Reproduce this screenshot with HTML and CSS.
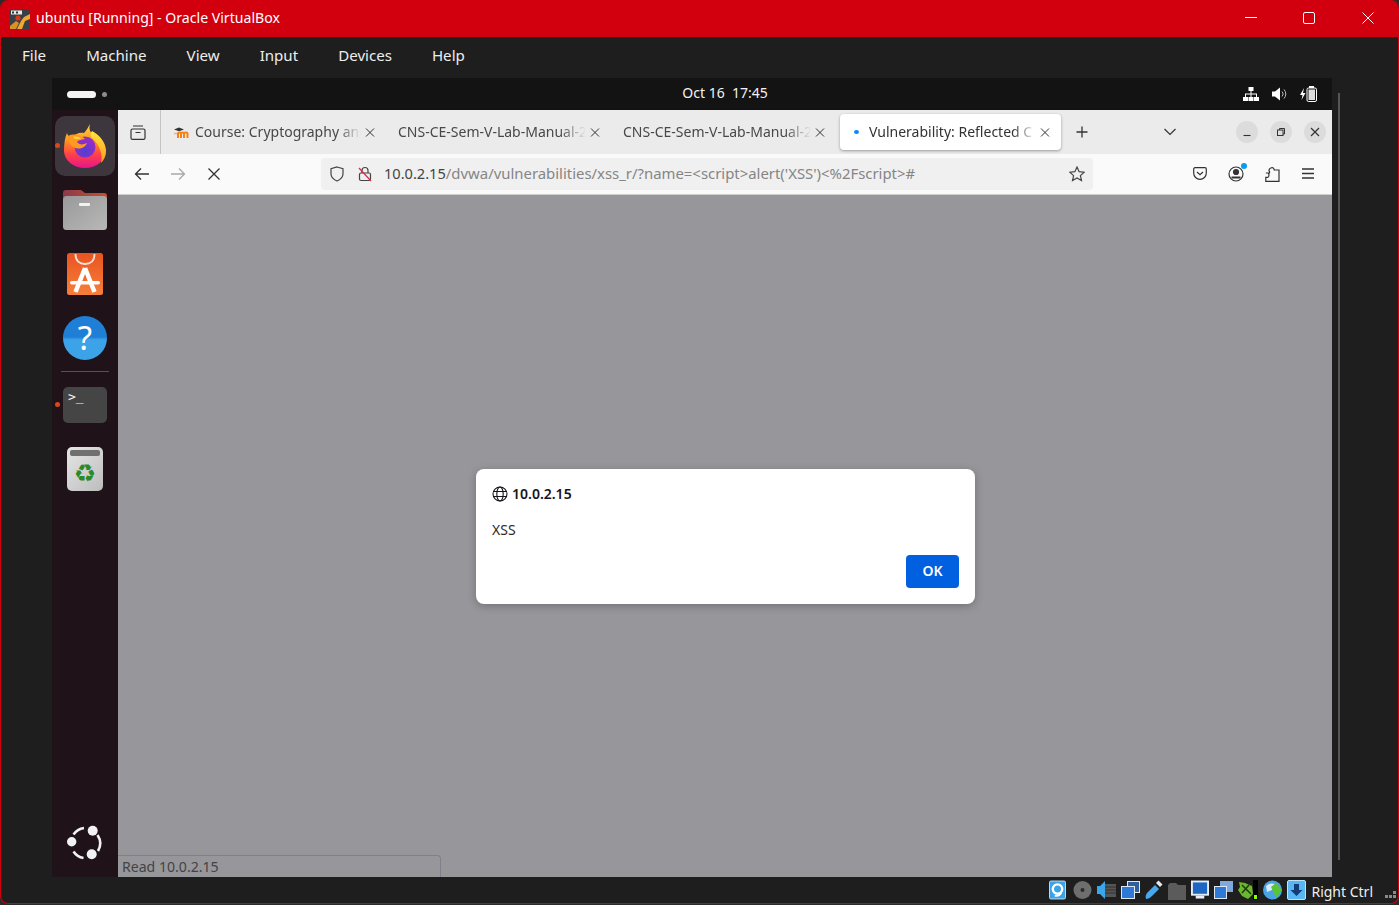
FILE: index.html
```html
<!DOCTYPE html>
<html lang="en">
<head>
    <meta charset="UTF-8">
    <title>ubuntu [Running] - Oracle VirtualBox</title>
    <link rel="stylesheet" href="styles.css">
</head>
<body>
<div class="vbox">
    <header class="titlebar">
        <svg class="app-icon" width="20" height="20" viewBox="0 0 20 20">
            <rect width="20" height="20" rx="1" fill="#3a3f46"/>
            <path d="M7 20 L11 12 L14 8 L20 5 V10 L15 12 L12 20Z" fill="#f0a92e"/>
            <path d="M0 17 L6 12 L9 14 L6 20 H0Z" fill="#d9922a"/>
            <circle cx="8" cy="9" r="2.6" fill="#d8391b"/>
            <rect x="1" y="1.5" width="11" height="4" fill="#e8e8e8"/>
            <rect x="2" y="2.5" width="2" height="2" fill="#333"/>
            <rect x="6" y="2.5" width="2" height="2" fill="#333"/>
        </svg>
        <span class="title-text">ubuntu [Running] - Oracle VirtualBox</span>
        <div class="win-controls">
            <svg width="58" height="14" viewBox="0 0 12 14"><path d="M0 6.500H12" stroke="#fff"/></svg>
            <svg width="58" height="14" viewBox="0 0 12 14"><rect x=".5" y="1.5" width="11" height="11" rx="1.5" fill="none" stroke="#fff"/></svg>
            <svg class="win-close" width="58" height="14" viewBox="0 0 12 14"><path d="M.5 1.5L11.5 12.5M11.5 1.5L.5 12.5" stroke="#fff"/></svg>
        </div>
    </header>

    <nav class="menubar">
        <a>File</a><a>Machine</a><a>View</a><a>Input</a><a>Devices</a><a>Help</a>
    </nav>

    <div class="stage">
        <div class="screen">
            <div class="gnome-bar">
                <div class="workspaces"><span class="ws-pill"></span><span class="ws-dot"></span></div>
                <div class="clock">Oct 16&nbsp; 17:45</div>
                <div class="tray">
                    <svg width="16" height="14" viewBox="0 0 16 14" fill="#fff"><rect x="5.5" y="0" width="5" height="4"/><rect x="0" y="10" width="5" height="4"/><rect x="5.5" y="10" width="5" height="4"/><rect x="11" y="10" width="5" height="4"/><path d="M7.500 4h1v2.500h5.500V10h-1V7.500H8.500V10h-1V7.500H3V10H2V6.500h5.500z"/></svg>
                    <svg width="15" height="14" viewBox="0 0 15 14"><path d="M0 4.500h3L8 .5v13l-5-4H0z" fill="#fff"/><path d="M10 4.500a3.500 3.500 0 0 1 0 5M12 2.500a6.500 6.500 0 0 1 0 9" fill="none" stroke="#bbb"/></svg>
                    <svg width="17" height="16" viewBox="0 0 17 16"><path d="M4 2L0 9h2.500L1.500 14 5.500 7H3z" fill="#fff"/><rect x="7" y="2" width="9.500" height="13.500" rx="1.500" fill="none" stroke="#fff"/><rect x="9" y="0" width="5" height="2" fill="#fff"/><rect x="8.500" y="3.500" width="6.500" height="10.500" fill="#ddd"/></svg>
                </div>
            </div>

            <div class="desktop">
                <aside class="dock">
                    <div class="dock-item is-active is-running">
                        <svg width="46" height="46" viewBox="0 0 46 46">
                            <defs>
                                <linearGradient id="ffBody" x1="0" y1="0" x2="0" y2="1"><stop offset="0" stop-color="#ffd83a"/><stop offset=".35" stop-color="#ff9a1f"/><stop offset=".7" stop-color="#ff3f4a"/><stop offset="1" stop-color="#e6158c"/></linearGradient>
                                <linearGradient id="ffEdge" x1="0" y1="0" x2="0" y2="1"><stop offset="0" stop-color="#ffe640"/><stop offset="1" stop-color="#ff9a1c"/></linearGradient>
                                <radialGradient id="ffGlobe" cx=".5" cy=".7"><stop offset="0" stop-color="#4f3fd4"/><stop offset="1" stop-color="#8f2fc4"/></radialGradient>
                            </defs>
                            <path d="M28 1C26 8 30 11 34 14C40 19 44 24 44 28A21 17 0 0 1 2 28C2 20 3 14 5 10C6 13 7 14 9 15C12 11 18 9 22 10C25 7 26 4 28 1Z" fill="url(#ffBody)"/>
                            <circle cx="23" cy="24" r="10.500" fill="url(#ffGlobe)"/>
                            <path d="M30 8C38 12 44 20 44 28C44 33 42 37 39 40C41 32 38 22 30 15C28 13 28 10 30 8Z" fill="url(#ffEdge)"/>
                            <path d="M6 13C12 10 19 12 23 16C19 17 16 17 15 19C17 22 21 22 25 20C22 27 13 27 9 22C7 19 6 16 6 13Z" fill="#ff9a1f"/>
                            <path d="M11 14C14 13 17 14 19 15.500C16 16.500 13 16.500 11 14Z" fill="#ffd23a"/>
                        </svg>
                    </div>
                    <div class="dock-item">
                        <svg width="44" height="42" viewBox="0 0 44 42">
                            <defs>
                                <linearGradient id="folderTop" x1="0" y1="0" x2="1" y2="0"><stop offset="0" stop-color="#8a3a4c"/><stop offset="1" stop-color="#c9512f"/></linearGradient>
                                <linearGradient id="folderFace" x1="0" y1="0" x2="1" y2="1"><stop offset="0" stop-color="#999"/><stop offset="1" stop-color="#b8b8b8"/></linearGradient>
                            </defs>
                            <path d="M0 4a3 3 0 0 1 3-3h15l4 3h19a3 3 0 0 1 3 3v10H0z" fill="url(#folderTop)"/>
                            <rect y="7" width="44" height="34" rx="3.500" fill="url(#folderFace)"/>
                            <rect x="16" y="14" width="11" height="3" rx="1" fill="#f2f2f2"/>
                        </svg>
                    </div>
                    <div class="dock-item">
                        <svg width="38" height="44" viewBox="0 0 38 44">
                            <defs><linearGradient id="bag" x1="0" y1="0" x2="0" y2="1"><stop offset="0" stop-color="#e95420"/><stop offset="1" stop-color="#f77f3a"/></linearGradient></defs>
                            <rect x="1" y="1" width="36" height="42" rx="2.500" fill="url(#bag)"/>
                            <path d="M9.500 2c0 7 4 10 9.500 10s9.500-3 9.500-10" fill="none" stroke="#f3e3da" stroke-width="1.800"/>
                            <path d="M19 16L9.500 40M19 16l9.500 24" fill="none" stroke="#fff" stroke-width="4.500"/>
                            <rect x="4" y="29" width="30" height="3.600" rx="1.800" fill="#fff"/>
                        </svg>
                    </div>
                    <div class="dock-item">
                        <div class="help-icon">?</div>
                    </div>
                    <div class="dock-sep"></div>
                    <div class="dock-item is-running">
                        <div class="term-icon">&gt;_</div>
                    </div>
                    <div class="dock-item">
                        <div class="trash-icon"><span class="trash-bar"></span><span class="trash-mark">♻</span></div>
                    </div>
                    <div class="dock-item dock-logo">
                        <svg width="36" height="36" viewBox="0 0 36 36">
                            <path d="M6.500 9.500A15 15 0 0 1 17 3M30.500 10A15 15 0 0 1 31 26M6.500 26.500A15 15 0 0 0 16.500 33" fill="none" stroke="#f2f2f2" stroke-width="2.600"/>
                            <circle cx="25.700" cy="5.700" r="5" fill="#f2f2f2"/>
                            <circle cx="4.700" cy="16.700" r="4.700" fill="#f2f2f2"/>
                            <circle cx="24.700" cy="29.300" r="5" fill="#f2f2f2"/>
                        </svg>
                    </div>
                </aside>

                <main class="browser">
                    <div class="tabbar">
                        <button class="tb-btn view-btn">
                            <svg width="16" height="15" viewBox="0 0 16 15" fill="none" stroke="#333" stroke-width="1.200"><rect x="1" y="4" width="14" height="10.400" rx="1.500"/><path d="M3 1h10"/><path d="M5.500 7.500h5"/></svg>
                        </button>
                        <div class="tabs">
                            <div class="tab">
                                <svg class="favicon moodle" width="16" height="16" viewBox="0 0 16 16"><path d="M1 5.500L6 3.500l5 2-5 1.800z" fill="#333"/><path d="M5 14V9.500c0-1.500 3-1.500 3 0V14M8 9.500c0-1.500 3-1.500 3 0V14M11 9.500c0-1.500 3.500-1.500 3.500 0V14" fill="none" stroke="#f98012" stroke-width="2"/><path d="M1 9.500h3" stroke="#f9b06a" stroke-width="1.500"/></svg>
                                <span class="tab-label">Course: Cryptography anc</span>
                                <svg class="tab-close" width="14" height="9" viewBox="0 0 14 9" stroke="#333"><path d="M3 .5l8 8M11 .5l-8 8"/></svg>
                            </div>
                            <div class="tab">
                                <span class="tab-label">CNS-CE-Sem-V-Lab-Manual-2</span>
                                <svg class="tab-close" width="14" height="9" viewBox="0 0 14 9" stroke="#333"><path d="M3 .5l8 8M11 .5l-8 8"/></svg>
                            </div>
                            <div class="tab">
                                <span class="tab-label">CNS-CE-Sem-V-Lab-Manual-2</span>
                                <svg class="tab-close" width="14" height="9" viewBox="0 0 14 9" stroke="#333"><path d="M3 .5l8 8M11 .5l-8 8"/></svg>
                            </div>
                            <div class="tab is-current">
                                <span class="favicon"><span class="loading-dot"></span></span>
                                <span class="tab-label">Vulnerability: Reflected C</span>
                                <svg class="tab-close" width="14" height="9" viewBox="0 0 14 9" stroke="#333"><path d="M3 .5l8 8M11 .5l-8 8"/></svg>
                            </div>
                        </div>
                        <button class="tb-btn new-tab">
                            <svg width="14" height="14" viewBox="0 0 14 14" stroke="#333" stroke-width="1.300"><path d="M7 1.500v11M1.500 7h11"/></svg>
                        </button>
                        <button class="tb-btn list-tabs">
                            <svg width="14" height="8" viewBox="0 0 14 8" fill="none" stroke="#333" stroke-width="1.200"><path d="M1.500 1L7 6.500 12.500 1"/></svg>
                        </button>
                        <div class="gtk-buttons">
                            <span class="gtk-btn"><svg width="10" height="10" viewBox="0 0 10 10"><path d="M1.500 8.500h7" stroke="#333" stroke-width="1.100"/></svg></span>
                            <span class="gtk-btn"><svg width="10" height="10" viewBox="0 0 10 10" fill="none" stroke="#333"><rect x="1.500" y="3" width="5.500" height="5.500"/><path d="M3.500 3V1.500h5V7H7"/></svg></span>
                            <span class="gtk-btn"><svg width="10" height="10" viewBox="0 0 10 10" stroke="#333" stroke-width="1.200"><path d="M1 1l8 8M9 1l-8 8"/></svg></span>
                        </div>
                    </div>

                    <div class="toolbar">
                        <button class="nav-btn">
                            <svg width="16" height="14" viewBox="0 0 16 14" fill="none" stroke="#333" stroke-width="1.300"><path d="M15 7H1.500M7 1.500L1.500 7 7 12.500"/></svg>
                        </button>
                        <button class="nav-btn">
                            <svg width="16" height="14" viewBox="0 0 16 14" fill="none" stroke="#a8a8a8" stroke-width="1.300"><path d="M1 7h13.500M9 1.500L14.500 7 9 12.500"/></svg>
                        </button>
                        <button class="nav-btn">
                            <svg width="12" height="12" viewBox="0 0 12 12" stroke="#333" stroke-width="1.300"><path d="M.5.500l11 11M11.500.500l-11 11"/></svg>
                        </button>
                        <div class="urlbar">
                            <svg class="shield" width="14" height="16" viewBox="0 0 14 16" fill="none" stroke="#444" stroke-width="1.200"><path d="M7 1l6 1.800v5c0 3.500-3 6-6 7.200-3-1.200-6-3.700-6-7.200v-5z"/></svg>
                            <svg class="lock" width="14" height="16" viewBox="0 0 14 16" fill="none"><path d="M4 7V4.500a3 3 0 0 1 6 0V7" stroke="#444" stroke-width="1.200"/><rect x="1.500" y="7" width="11" height="7.500" rx="1.500" stroke="#444" stroke-width="1.200"/><path d="M1 2l12 13" stroke="#e22850" stroke-width="1.300"/></svg>
                            <span class="url"><span class="url-host">10.0.2.15</span>/dvwa/vulnerabilities/xss_r/?name=&lt;script&gt;alert('XSS')&lt;%2Fscript&gt;#</span>
                            <svg class="star" width="16" height="16" viewBox="0 0 16 16" fill="none" stroke="#444" stroke-width="1.200"><path d="M8 1l2.100 4.700 5.100.500-3.800 3.400 1.100 5L8 12l-4.500 2.600 1.100-5L.8 6.200l5.100-.500z"/></svg>
                        </div>
                        <div class="tool-icons">
                            <svg width="14" height="13" viewBox="0 0 14 13" fill="none" stroke="#333" stroke-width="1.200"><path d="M2 .700h10A1.300 1.300 0 0 1 13.300 2v4a6.300 6.300 0 0 1-12.600 0V2A1.300 1.300 0 0 1 2 .700z"/><path d="M4 5l3 2.800L10 5"/></svg>
                            <span class="account">
                                <svg width="16" height="16" viewBox="0 0 16 16" fill="none" stroke="#333" stroke-width="1.200"><circle cx="8" cy="8" r="7"/><circle cx="8" cy="6" r="2.500" fill="#333"/><path d="M3.500 11.500h9" stroke-width="2"/></svg>
                                <span class="account-badge"></span>
                            </span>
                            <svg width="15" height="16" viewBox="0 0 15 16" fill="none" stroke="#333" stroke-width="1.200"><path d="M.8 7h3.700V5.500c-1-1-.5-3 2-3.800 1.500-.5 2.700.8 2.700 2.300H14v11.300H.8v-4h2c1.500 0 1.500-4.300 0-4.300z"/></svg>
                            <svg width="14" height="11" viewBox="0 0 14 11" stroke="#333" stroke-width="1.300"><path d="M1 1h12M1 5.500h12M1 10h12"/></svg>
                        </div>
                    </div>

                    <div class="page">
                        <div class="alert">
                            <div class="alert-origin">
                                <svg width="16" height="16" viewBox="0 0 16 16" fill="none" stroke="#15141a" stroke-width="1.100"><circle cx="8" cy="8" r="7"/><ellipse cx="8" cy="8" rx="3.200" ry="7"/><path d="M1.500 5.500h13M1.500 10.500h13"/></svg>
                                <span>10.0.2.15</span>
                            </div>
                            <div class="alert-msg">XSS</div>
                            <div class="alert-actions"><button class="ok-btn">OK</button></div>
                        </div>
                        <div class="status-panel">Read 10.0.2.15</div>
                    </div>
                </main>
            </div>
        </div>
        <div class="mini-scroll"></div>
    </div>

    <footer class="statusbar">
        <svg class="sb-hd" width="17" height="20" viewBox="0 0 18 20"><rect x=".5" y=".5" width="17" height="19" rx="1.500" fill="#3da3e8" stroke="#bfe3fa"/><circle cx="9" cy="9" r="5" fill="none" stroke="#fff" stroke-width="2.500"/><path d="M6 16c4 1 7-1 7-5" fill="none" stroke="#fff" stroke-width="2"/></svg>
        <svg width="19" height="20" viewBox="0 0 19 20"><circle cx="9.500" cy="10" r="9" fill="#6e6e6e"/><circle cx="9.500" cy="10" r="2" fill="#2b2b2b"/></svg>
        <svg width="19" height="20" viewBox="0 0 19 20"><rect x="8" y="4" width="11" height="13" fill="#555"/><path d="M7 7h12M7 10h12M7 13h12" stroke="#333"/><path d="M0 6h3l5-5v18l-5-5H0z" fill="#3aa7ea"/></svg>
        <svg width="19" height="20" viewBox="0 0 19 20"><rect x="6.500" y="1.500" width="12" height="11" fill="#2f5f9c" stroke="#dfe8f2"/><rect x=".5" y="6.500" width="13" height="12" fill="#2f79d6" stroke="#dfe8f2"/></svg>
        <svg width="18" height="20" viewBox="0 0 18 20"><path d="M1 19c-1-3 0-5 2-7l7-7 4 4-7 7c-2 2-4 3-6 3z" fill="#48a8ee"/><path d="M11 3l2.500-2.500 4 4L15 7z" fill="#e8e8e8"/></svg>
        <svg width="18" height="20" viewBox="0 0 18 20" fill="#5b5b5b"><path d="M0 5l2-2h6l2 2h8v15H0z"/></svg>
        <svg width="18" height="20" viewBox="0 0 19 20"><rect x="1" y="1" width="17" height="14" fill="#1e66c4" stroke="#e8eef5" stroke-width="2"/><rect x="5" y="16" width="9" height="3" fill="#e8eef5"/></svg>
        <svg width="19" height="20" viewBox="0 0 19 20"><rect x="6" y="1" width="13" height="11" fill="#7fa9df"/><rect x=".5" y="6.500" width="12" height="12" fill="#2f79d6" stroke="#dfe8f2"/></svg>
        <svg width="20" height="20" viewBox="0 0 20 20"><rect x="15" width="5" height="20" fill="#000"/><path d="M1 2l6 1 7 3 1 8-5 5-6-3-4-6 2-3z" fill="#6ab82c"/><path d="M4 5l9 9M11 5l-7 8" stroke="#1f3a0c" stroke-width="1.500"/><rect x="16" y="15" width="3" height="4" fill="#8cff00"/></svg>
        <svg width="19" height="20" viewBox="0 0 19 20"><circle cx="9.500" cy="10" r="9.500" fill="#4aa3e4"/><path d="M3 6c3-3 6-3 9-2l-3 6-5 2z" fill="#d6ecfb"/><path d="M8 7l5-4 6 7-6 8z" fill="#5bc23a"/></svg>
        <svg width="19" height="20" viewBox="0 0 19 20"><rect x=".5" y=".5" width="18" height="19" rx="1.500" fill="#58b6f2" stroke="#bfe3fa"/><path d="M7 4h5v6h3.500L9.500 16 3.500 10H7z" fill="#143d78"/></svg>
        <span class="host-key">Right Ctrl</span>
        <span class="grip"><i></i><i></i><i></i><i></i><i></i><i></i></span>
    </footer>
</div>
</body>
</html>
```

FILE: styles.css
```css
* {
    box-sizing: border-box;
}
body {
    margin: 0;
    width: 1399px;
    height: 905px;
    overflow: hidden;
    background: #2b2b2b;
    font-family: "Noto Sans", sans-serif;
}
button {
    border: 0;
    padding: 0;
    background: none;
    font: inherit;
}
.vbox {
    display: flex;
    flex-direction: column;
    height: 904px;
    background: #1e1e1e;
    border: 1px solid #d2000f;
    border-top: 0;
    border-radius: 8px;
    overflow: hidden;
}

/* host window */
.titlebar {
    display: flex;
    align-items: center;
    flex: none;
    height: 37px;
    margin: 0 -1px;
    padding: 0 2px 0 10px;
    background: #d2000f;
    color: #fff;
}
.app-icon {
    flex: none;
    margin-right: 6px;
}
.title-text {
    margin-top: -2px;
    font-size: 14.1px;
}
.win-controls {
    display: flex;
    margin: -2px 0 0 auto;
}
.win-controls svg {
    display: block;
}
.win-close {
    margin-left: 1px;
}
.menubar {
    display: flex;
    align-items: center;
    flex: none;
    gap: 40px;
    height: 41px;
    padding: 0 0 6px 21px;
    color: #eee;
    font-size: 15.1px;
}
.stage {
    display: flex;
    flex: none;
    height: 799px;
    padding-left: 51px;
}
.mini-scroll {
    width: 2px;
    height: 767px;
    margin: 15px 0 0 6px;
    background: #555;
}
.statusbar {
    display: flex;
    align-items: center;
    justify-content: flex-end;
    flex: none;
    gap: 5px;
    height: 26px;
    padding-right: 2px;
    color: #eee;
    font-size: 14px;
}
.sb-hd {
    margin-right: 2px;
}
.host-key {
    margin-top: 2px;
}
.grip {
    display: grid;
    grid-template-columns: repeat(3, 3px);
    grid-template-rows: repeat(2, 3px);
    gap: 1px;
    margin: 8px 0 0 7px;
}
.grip i {
    background: #8a8a8a;
}
.grip i:nth-child(1), .grip i:nth-child(2) {
    visibility: hidden;
}

/* guest desktop */
.screen {
    display: flex;
    flex-direction: column;
    width: 1280px;
    background: #131313;
}
.gnome-bar {
    display: grid;
    grid-template-columns: 558px 200px 1fr;
    align-items: center;
    flex: none;
    height: 32px;
    padding: 0 15px;
    color: #f2f2f2;
    font-size: 14px;
}
.clock {
    padding-bottom: 4px;
    text-align: center;
}
.workspaces {
    display: flex;
    align-items: center;
    gap: 6px;
}
.ws-pill {
    width: 29px;
    height: 7px;
    border-radius: 4px;
    background: #f4f4f4;
}
.ws-dot {
    width: 5px;
    height: 5px;
    border-radius: 50%;
    background: #8c8c8c;
}
.tray {
    display: flex;
    align-items: center;
    justify-content: flex-end;
    gap: 13px;
}
.desktop {
    display: flex;
    flex: 1;
    min-height: 0;
}
.dock {
    display: flex;
    flex-direction: column;
    flex: none;
    width: 66px;
    padding: 4px 0 2px;
    background: #1f1219;
}
.dock-item {
    position: relative;
    display: flex;
    align-items: center;
    justify-content: center;
    height: 64px;
    flex: none;
}
.dock-item.is-active::before {
    content: "";
    position: absolute;
    left: 3px;
    top: 2px;
    width: 60px;
    height: 60px;
    border-radius: 10px;
    background: #3d363c;
}
.dock-item svg {
    position: relative;
}
.dock-item.is-running::after {
    content: "";
    position: absolute;
    left: 3px;
    top: 29px;
    width: 5px;
    height: 5px;
    border-radius: 50%;
    background: #d9481c;
}
.dock-sep {
    height: 1px;
    margin: 1px 9px;
    background: #5a4f55;
    flex: none;
}
.dock-logo {
    margin-top: auto;
}
.help-icon {
    width: 44px;
    height: 44px;
    border-radius: 50%;
    background: linear-gradient(#1f7fd6 48%, #3ca3e8 54%);
    color: #fff;
    font-size: 33px;
    line-height: 44px;
    text-align: center;
}
.term-icon {
    width: 44px;
    height: 36px;
    padding: 0 0 0 5px;
    border-radius: 5px;
    background: #454545;
    color: #f2f2f2;
    font-family: "DejaVu Sans Mono", monospace;
    font-size: 13px;
    line-height: 19px;
}
.trash-icon {
    display: flex;
    flex-direction: column;
    align-items: center;
    width: 36px;
    height: 44px;
    padding-top: 3px;
    border-radius: 5px;
    background: linear-gradient(135deg, #e6e6e6, #bdbdbd);
}
.trash-bar {
    width: 30px;
    height: 6px;
    border-radius: 2px;
    background: #707070;
}
.trash-mark {
    margin-top: 3px;
    color: #2a8a2a;
    font-family: "DejaVu Sans", sans-serif;
    font-size: 25px;
    line-height: 30px;
}

/* firefox */
.browser {
    display: flex;
    flex-direction: column;
    flex: 1;
    min-width: 0;
    color: #333;
}
.tabbar {
    display: flex;
    align-items: center;
    flex: none;
    height: 44px;
    background: #ebebeb;
}
.tb-btn {
    display: flex;
    align-items: center;
    justify-content: center;
}
.view-btn {
    width: 43px;
    height: 44px;
    padding-right: 3px;
    border-right: 1px solid #c4c4c4;
}
.tabs {
    display: flex;
    gap: 4px;
    padding-left: 4px;
}
.tab {
    display: flex;
    align-items: center;
    width: 221px;
    height: 36px;
    padding: 0 9px 0 8px;
    border-radius: 4px;
    color: #484848;
    font-size: 14px;
}
.tab.is-current {
    background: #fff;
    box-shadow: 0 1px 3px rgba(0, 0, 0, .35);
    color: #333;
}
.favicon {
    display: flex;
    align-items: center;
    justify-content: center;
    flex: none;
    width: 16px;
    height: 16px;
    margin-right: 5px;
}
.favicon.moodle {
    margin-right: 6px;
}
.loading-dot {
    width: 5px;
    height: 4px;
    border-radius: 50%;
    background: #0a84ff;
}
.tab-label {
    flex: 1;
    min-width: 0;
    padding-bottom: 2px;
    overflow: hidden;
    white-space: nowrap;
    -webkit-mask-image: linear-gradient(to right, #000 86%, transparent 100%);
    mask-image: linear-gradient(to right, #000 86%, transparent 100%);
}
.tab-close {
    flex: none;
    margin-left: 2px;
}
.new-tab {
    width: 16px;
    height: 16px;
    margin-left: 13px;
}
.list-tabs {
    width: 16px;
    height: 16px;
    margin-left: 72px;
}
.gtk-buttons {
    display: flex;
    gap: 12px;
    margin-left: 58px;
}
.gtk-btn {
    display: flex;
    align-items: center;
    justify-content: center;
    width: 22px;
    height: 22px;
    border-radius: 50%;
    background: #dcdcdc;
}
.toolbar {
    display: flex;
    align-items: center;
    flex: none;
    height: 41px;
    padding: 0 0 1px 6px;
    background: #fafafa;
    border-bottom: 1px solid #cfcfcf;
}
.nav-btn {
    display: flex;
    align-items: center;
    justify-content: center;
    width: 36px;
    height: 32px;
}
.urlbar {
    display: flex;
    align-items: center;
    width: 772px;
    height: 32px;
    margin-left: 89px;
    padding: 0 8px 0 9px;
    border-radius: 4px;
    background: #f0f0f0;
}
.lock {
    margin-left: 14px;
}
.url {
    flex: 1;
    margin-left: 12px;
    padding-bottom: 2px;
    color: #858585;
    font-size: 14.9px;
    white-space: nowrap;
}
.url-host {
    color: #444;
    font-size: 14.6px;
}
.tool-icons {
    display: flex;
    align-items: center;
    gap: 21px;
    margin-left: 100px;
}
.account {
    position: relative;
    display: flex;
}
.account-badge {
    position: absolute;
    top: -3px;
    right: -3px;
    width: 6px;
    height: 6px;
    border-radius: 50%;
    background: #0a9bf0;
}
.page {
    position: relative;
    flex: 1;
    background: #97969b;
}
.alert {
    position: absolute;
    left: 358px;
    top: 274px;
    width: 499px;
    height: 135px;
    padding: 16px;
    border-radius: 8px;
    background: #fff;
    box-shadow: 0 2px 8px rgba(0, 0, 0, .25);
    color: #15141a;
    font-size: 14px;
}
.alert-origin {
    display: flex;
    align-items: center;
    gap: 4px;
    height: 18px;
    font-weight: 600;
}
.alert-origin span {
    margin-top: -2px;
}
.alert-msg {
    margin-top: 17px;
    color: #2b2b2b;
    line-height: 20px;
}
.alert-actions {
    display: flex;
    justify-content: flex-end;
    margin-top: 15px;
}
.ok-btn {
    width: 53px;
    height: 33px;
    padding-bottom: 2px;
    border-radius: 4px;
    background: #0060df;
    color: #fff;
    font-weight: 600;
    font-size: 14px;
}
.status-panel {
    position: absolute;
    left: 0;
    bottom: 0;
    width: 323px;
    height: 22px;
    padding: 1px 4px 0;
    border: 1px solid #80808a;
    border-width: 1px 1px 0 0;
    border-top-right-radius: 4px;
    color: #444;
    font-size: 14.1px;
}
```
